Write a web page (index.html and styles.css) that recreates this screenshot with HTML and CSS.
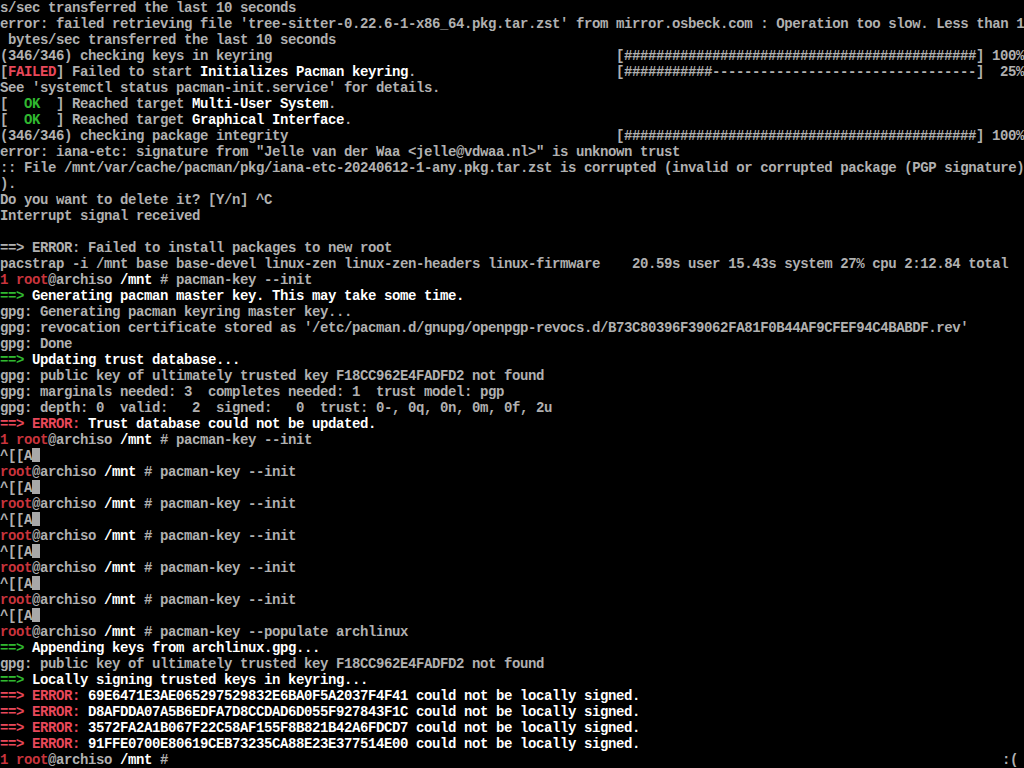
FILE: index.html
```html
<!DOCTYPE html>
<html>
<head>
<meta charset="utf-8">
<link rel="stylesheet" href="styles.css">
</head>
<body>
<div class="tty">
<div class="ln">s/sec transferred the last 10 seconds</div>
<div class="ln">error: failed retrieving file 'tree-sitter-0.22.6-1-x86_64.pkg.tar.zst' from mirror.osbeck.com : Operation too slow. Less than 1</div>
<div class="ln"> bytes/sec transferred the last 10 seconds</div>
<div class="ln"><span class="lbl">(346/346) checking keys in keyring</span>[############################################] 100%</div>
<div class="ln"><span class="lbl">[<span class="rb">FAILED</span>] Failed to start <span class="w">Initializes Pacman keyring</span>.</span>[###########---------------------------------]  25%</div>
<div class="ln">See 'systemctl status pacman-init.service' for details.</div>
<div class="ln">[  <span class="gb">OK</span>  ] Reached target <span class="w">Multi-User System</span>.</div>
<div class="ln">[  <span class="gb">OK</span>  ] Reached target <span class="w">Graphical Interface</span>.</div>
<div class="ln"><span class="lbl">(346/346) checking package integrity</span>[############################################] 100%</div>
<div class="ln">error: iana-etc: signature from "Jelle van der Waa &lt;jelle@vdwaa.nl&gt;" is unknown trust</div>
<div class="ln">:: File /mnt/var/cache/pacman/pkg/iana-etc-20240612-1-any.pkg.tar.zst is corrupted (invalid or corrupted package (PGP signature)</div>
<div class="ln">).</div>
<div class="ln">Do you want to delete it? [Y/n] ^C</div>
<div class="ln">Interrupt signal received</div>
<div class="ln"> </div>
<div class="ln">==&gt; ERROR: Failed to install packages to new root</div>
<div class="ln">pacstrap -i /mnt base base-devel linux-zen linux-zen-headers linux-firmware    20.59s user 15.43s system 27% cpu 2:12.84 total</div>
<div class="ln"><span class="r">1 root</span>@archiso <span class="w">/mnt</span> # pacman-key --init</div>
<div class="ln"><span class="gb">==&gt;</span><span class="w"> Generating pacman master key. This may take some time.</span></div>
<div class="ln">gpg: Generating pacman keyring master key...</div>
<div class="ln">gpg: revocation certificate stored as '/etc/pacman.d/gnupg/openpgp-revocs.d/B73C80396F39062FA81F0B44AF9CFEF94C4BABDF.rev'</div>
<div class="ln">gpg: Done</div>
<div class="ln"><span class="gb">==&gt;</span><span class="w"> Updating trust database...</span></div>
<div class="ln">gpg: public key of ultimately trusted key F18CC962E4FADFD2 not found</div>
<div class="ln">gpg: marginals needed: 3  completes needed: 1  trust model: pgp</div>
<div class="ln">gpg: depth: 0  valid:   2  signed:   0  trust: 0-, 0q, 0n, 0m, 0f, 2u</div>
<div class="ln"><span class="rb">==&gt; ERROR:</span><span class="w"> Trust database could not be updated.</span></div>
<div class="ln"><span class="r">1 root</span>@archiso <span class="w">/mnt</span> # pacman-key --init</div>
<div class="ln">^[[A<span class="cur"></span></div>
<div class="ln"><span class="r">root</span>@archiso <span class="w">/mnt</span> # pacman-key --init</div>
<div class="ln">^[[A<span class="cur"></span></div>
<div class="ln"><span class="r">root</span>@archiso <span class="w">/mnt</span> # pacman-key --init</div>
<div class="ln">^[[A<span class="cur"></span></div>
<div class="ln"><span class="r">root</span>@archiso <span class="w">/mnt</span> # pacman-key --init</div>
<div class="ln">^[[A<span class="cur"></span></div>
<div class="ln"><span class="r">root</span>@archiso <span class="w">/mnt</span> # pacman-key --init</div>
<div class="ln">^[[A<span class="cur"></span></div>
<div class="ln"><span class="r">root</span>@archiso <span class="w">/mnt</span> # pacman-key --init</div>
<div class="ln">^[[A<span class="cur"></span></div>
<div class="ln"><span class="r">root</span>@archiso <span class="w">/mnt</span> # pacman-key --populate archlinux</div>
<div class="ln"><span class="gb">==&gt;</span><span class="w"> Appending keys from archlinux.gpg...</span></div>
<div class="ln">gpg: public key of ultimately trusted key F18CC962E4FADFD2 not found</div>
<div class="ln"><span class="gb">==&gt;</span><span class="w"> Locally signing trusted keys in keyring...</span></div>
<div class="ln"><span class="rb">==&gt; ERROR:</span><span class="w"> 69E6471E3AE065297529832E6BA0F5A2037F4F41 could not be locally signed.</span></div>
<div class="ln"><span class="rb">==&gt; ERROR:</span><span class="w"> D8AFDDA07A5B6EDFA7D8CCDAD6D055F927843F1C could not be locally signed.</span></div>
<div class="ln"><span class="rb">==&gt; ERROR:</span><span class="w"> 3572FA2A1B067F22C58AF155F8B821B42A6FDCD7 could not be locally signed.</span></div>
<div class="ln"><span class="rb">==&gt; ERROR:</span><span class="w"> 91FFE0700E80619CEB73235CA88E23E377514E00 could not be locally signed.</span></div>
<div class="ln last"><span><span class="r">1 root</span>@archiso <span class="w">/mnt</span> #</span><span>:(</span></div>
</div>
</body>
</html>
```
FILE: styles.css
```css
html, body {
  margin: 0;
  padding: 0;
  background: #000;
}
.tty {
  width: 1024px;
  height: 768px;
  overflow: hidden;
  background: #000;
  color: #b0b0b0;
  font-family: "Liberation Mono", "DejaVu Sans Mono", monospace;
  font-size: 14px;
  letter-spacing: -0.4px;
  font-weight: bold;
}
.ln {
  height: 16px;
  line-height: 16px;
  white-space: pre;
}
.lbl {
  display: inline-block;
  width: 616px;
}
.w { color: #ffffff; }
.r { color: #c8343c; }
.rb { color: #e8485a; }
.gb { color: #30b830; }
.cur {
  display: inline-block;
  width: 8px;
  height: 14px;
  background: #a8a8a8;
  vertical-align: -2px;
}
.last {
  display: flex;
  justify-content: space-between;
  padding-right: 6px;
}
```
